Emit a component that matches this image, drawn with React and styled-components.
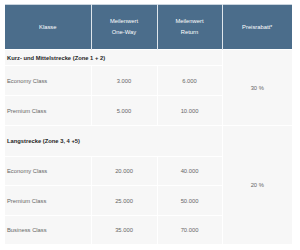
import styled, { createGlobalStyle } from 'styled-components';

const GlobalStyle = createGlobalStyle`
  body {
    margin: 0;
    background: #ffffff;
    font-family: "Liberation Sans", Arial, sans-serif;
  }
`;

const Wrapper = styled.div`
  padding: 4px 0 0 5px;
`;

const Table = styled.table`
  border-collapse: collapse;
  table-layout: fixed;
  width: 287px;
  font-size: 5.8px;
`;

const HeadCell = styled.th`
  background: #4b6d8b;
  color: #ffffff;
  font-weight: normal;
  height: 44px;
  padding: 0;
  line-height: 11px;
  text-align: center;
  border-left: 1px solid #dfe6ec;
  border-right: 1px solid #dfe6ec;
  border-top: 1px solid #c9d4de;
  &:first-child { border-left: none; }
  &:last-child { border-right: none; }
`;

const Row = styled.tr`
  height: ${props => props.h}px;
`;

const Cell = styled.td`
  background: #f7f7f7;
  border: 1px solid #ffffff;
  padding: 0 0 0 ${props => props.left ? '2px' : '0'};
  color: #666666;
  text-align: ${props => props.left ? 'left' : 'center'};
  &:first-child { border-left: none; }
  &:last-child { border-right: none; }
`;

const SectionCell = styled(Cell)`
  color: #1e1e1e;
  font-weight: bold;
`;

const sections = [
  {
    title: 'Kurz- und Mittelstrecke (Zone 1 + 2)',
    titleHeight: 16,
    discount: '30 %',
    rows: [
      { name: 'Economy Class', oneWay: '3.000', ret: '6.000', h: 30 },
      { name: 'Premium Class', oneWay: '5.000', ret: '10.000', h: 30 },
    ],
  },
  {
    title: 'Langstrecke (Zone 3, 4 +5)',
    titleHeight: 31,
    discount: '20 %',
    rows: [
      { name: 'Economy Class', oneWay: '20.000', ret: '40.000', h: 29 },
      { name: 'Premium Class', oneWay: '25.000', ret: '50.000', h: 30 },
      { name: 'Business Class', oneWay: '35.000', ret: '70.000', h: 29 },
    ],
  },
];

const App = () => {
  return (
    <Wrapper>
      <GlobalStyle />
      <Table>
        <colgroup>
          <col style={{ width: 86 }} />
          <col style={{ width: 66 }} />
          <col style={{ width: 65 }} />
          <col style={{ width: 70 }} />
        </colgroup>
        <thead>
          <tr>
            <HeadCell>Klasse</HeadCell>
            <HeadCell>Meilenwert<br />One-Way</HeadCell>
            <HeadCell>Meilenwert<br />Return</HeadCell>
            <HeadCell>Preisrabatt*</HeadCell>
          </tr>
        </thead>
        <tbody>
          {sections.map(section => [
            <Row key={section.title} h={section.titleHeight}>
              <SectionCell left colSpan={3}>{section.title}</SectionCell>
              <Cell rowSpan={section.rows.length + 1}>{section.discount}</Cell>
            </Row>,
            ...section.rows.map(row => (
              <Row key={section.title + row.name} h={row.h}>
                <Cell left>{row.name}</Cell>
                <Cell>{row.oneWay}</Cell>
                <Cell>{row.ret}</Cell>
              </Row>
            )),
          ])}
        </tbody>
      </Table>
    </Wrapper>
  );
};

export default App;
